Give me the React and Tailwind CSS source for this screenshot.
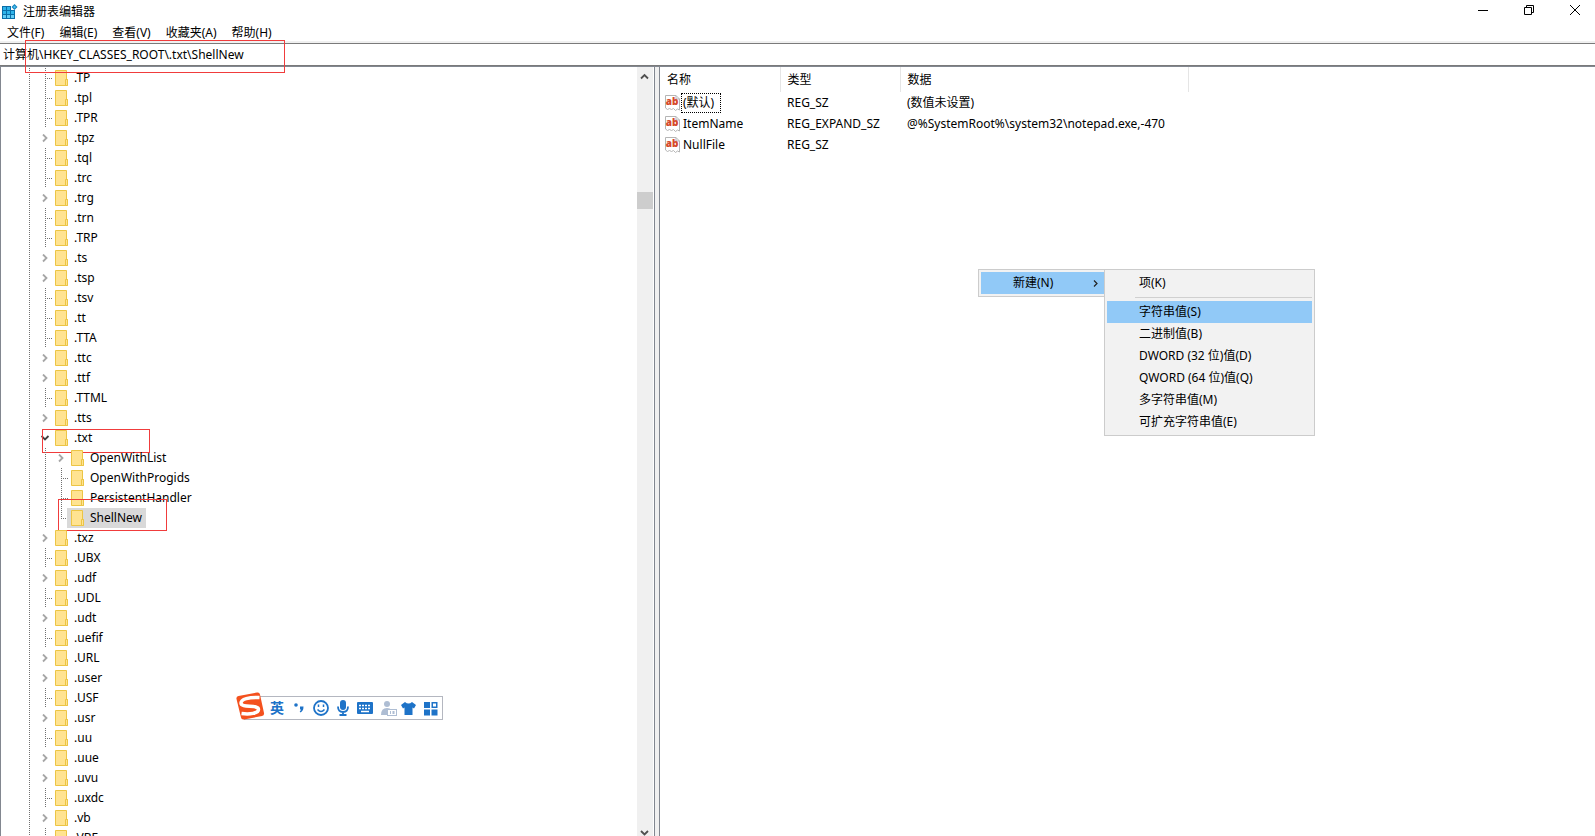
import { useState } from 'react';
import clsx from 'clsx';

const MENUS = ['文件(F)', '编辑(E)', '查看(V)', '收藏夹(A)', '帮助(H)'];

const TREE = [
  { name: '.TP' },
  { name: '.tpl' },
  { name: '.TPR' },
  { name: '.tpz', expandable: true },
  { name: '.tql' },
  { name: '.trc' },
  { name: '.trg', expandable: true },
  { name: '.trn' },
  { name: '.TRP' },
  { name: '.ts', expandable: true },
  { name: '.tsp', expandable: true },
  { name: '.tsv' },
  { name: '.tt' },
  { name: '.TTA' },
  { name: '.ttc', expandable: true },
  { name: '.ttf', expandable: true },
  { name: '.TTML' },
  { name: '.tts', expandable: true },
  { name: '.txt', expandable: true, open: true, marked: true },
  { name: 'OpenWithList', child: true, expandable: true },
  { name: 'OpenWithProgids', child: true },
  { name: 'PersistentHandler', child: true },
  { name: 'ShellNew', child: true, last: true, marked: true },
  { name: '.txz', expandable: true },
  { name: '.UBX' },
  { name: '.udf', expandable: true },
  { name: '.UDL' },
  { name: '.udt', expandable: true },
  { name: '.uefif' },
  { name: '.URL', expandable: true },
  { name: '.user', expandable: true },
  { name: '.USF' },
  { name: '.usr', expandable: true },
  { name: '.uu' },
  { name: '.uue', expandable: true },
  { name: '.uvu', expandable: true },
  { name: '.uxdc' },
  { name: '.vb', expandable: true },
  { name: '.VBE' },
];

const VALUES = [
  { name: '(默认)', type: 'REG_SZ', data: '(数值未设置)', focused: true },
  { name: 'ItemName', type: 'REG_EXPAND_SZ', data: '@%SystemRoot%\\system32\\notepad.exe,-470' },
  { name: 'NullFile', type: 'REG_SZ', data: '' },
];

const NEW_ITEMS = [
  '字符串值(S)',
  '二进制值(B)',
  'DWORD (32 位)值(D)',
  'QWORD (64 位)值(Q)',
  '多字符串值(M)',
  '可扩充字符串值(E)',
];

function RegeditIcon() {
  return (
    <svg className="h-4 w-4" viewBox="0 0 16 16" aria-hidden="true">
      <path d="M0 2h9v4h4v9H0z" fill="#0a6ea8" />
      <path d="M1 3h3v3H1zM5 3h3v3H5zM1 7h3v3H1zM5 7h3v3H5zM9 7h3v3H9z" fill="#2fb4ea" />
      <path d="M1 11h3v3H1zM5 11h3v3H5zM9 11h3v3H9z" fill="#63cdf5" />
      <path d="M12.500 0 15.500 3l-3 3-3-3z" fill="#1583bf" />
      <path d="M12.500 1.500 14 3l-1.500 1.500L11 3z" fill="#49c0f0" />
    </svg>
  );
}

function FolderIcon() {
  return (
    <svg className="h-4 w-[13px] shrink-0" viewBox="0 0 13 16" aria-hidden="true">
      <path d="M.5.5h11v9h1v6H.5z" fill="#ffe391" stroke="#ecc545" />
      <path d="M10.500 9.500h2v6h-2z" fill="#ffe391" stroke="#ecc545" />
    </svg>
  );
}

function StringIcon() {
  return (
    <svg className="h-4 w-4 shrink-0" viewBox="0 0 16 16" aria-hidden="true">
      <path d="M.5.500h10.500l3.500 3.500v11l-2-1-2 1.500-2-2-2 1-2-1-2 1L.5 13z" fill="#fff" stroke="#b5b5b5" />
      <path d="M11 .5V4h3.500" fill="none" stroke="#b5b5b5" />
      <text x="7" y="10" textAnchor="middle" fontSize="10" fontWeight="900" fontFamily="Noto Sans, sans-serif" fill="#d6492a">ab</text>
    </svg>
  );
}

function Chevron({ open }) {
  return open ? (
    <svg className="h-[9px] w-[9px]" viewBox="0 0 9 9" aria-hidden="true">
      <path d="M.5 2 4 5.500 7.500 2" fill="none" stroke="#404040" strokeWidth="1.800" />
    </svg>
  ) : (
    <svg className="h-[9px] w-[9px]" viewBox="0 0 9 9" aria-hidden="true">
      <path d="M2 .5 5.500 4 2 7.500" fill="none" stroke="#a6a6a6" strokeWidth="1.800" />
    </svg>
  );
}

// One 16px column of the tree's dotted guides
function Guide({ kind, open }) {
  return (
    <span className="flex h-5 w-4 shrink-0 items-center justify-center">
      {kind === 'toggle' ? (
        <Chevron open={open} />
      ) : (
        <svg className="h-5 w-4" viewBox="0 0 16 20" fill="none" stroke="#707070" strokeDasharray="1 1" aria-hidden="true">
          <path d={kind === 'corner' ? 'M8.500 0v11' : 'M8.500 0v20'} />
          {(kind === 'tee' || kind === 'corner') && <path d="M10 10.500h5" />}
        </svg>
      )}
    </span>
  );
}

function TreeRow({ node, selected, onSelect }) {
  let kind = 'tee';
  if (node.expandable) kind = 'toggle';
  else if (node.last) kind = 'corner';
  return (
    <li className="relative flex h-5 pl-5">
      <Guide kind="line" />
      {node.child && <Guide kind="line" />}
      <Guide kind={kind} open={node.open} />
      <button
        type="button"
        onClick={onSelect}
        className={clsx('-ml-[2px] flex h-5 items-center gap-[6px] pr-1 pl-1 whitespace-pre', selected && 'bg-[#d9d9d9]')}
      >
        <FolderIcon />
        <span>{node.name}</span>
      </button>
      {node.marked && (
        <span
          className={clsx(
            'pointer-events-none absolute border border-[#f03c3c]',
            node.child ? '-top-[9px] left-[57px] h-8 w-[109px]' : 'top-[1px] left-[41px] h-6 w-[108px]'
          )}
        />
      )}
    </li>
  );
}

function TreePane() {
  const [selected, setSelected] = useState('ShellNew');
  return (
    <div className="flex w-[655px] shrink-0 overflow-hidden border-x border-[#828790] pr-px">
      <ul className="min-w-0 grow pt-px">
        {TREE.map((node) => (
          <TreeRow
            key={node.name}
            node={node}
            selected={selected === node.name}
            onSelect={() => setSelected(node.name)}
          />
        ))}
      </ul>
      <div className="flex w-4 shrink-0 flex-col items-center bg-[#f0f0f0]">
        <svg className="mt-[5px] mr-px h-[9px] w-[9px] shrink-0" viewBox="0 0 9 9" aria-hidden="true">
          <path d="M1 6.500 4.500 3 8 6.500" fill="none" stroke="#505050" strokeWidth="1.800" />
        </svg>
        <div className="mt-[111px] h-[17px] w-full shrink-0 bg-[#cdcdcd]" />
        <div className="grow" />
        <svg className="mr-px h-2 w-[9px] shrink-0" viewBox="0 0 9 8" aria-hidden="true">
          <path d="M1 3 4.500 6.500 8 3" fill="none" stroke="#505050" strokeWidth="1.800" />
        </svg>
      </div>
    </div>
  );
}

function ValuePane() {
  return (
    <div className="min-w-0 grow overflow-hidden border-l border-[#828790]">
      <table className="w-[528px] table-fixed border-collapse text-left">
        <colgroup>
          <col className="w-[120px]" />
          <col className="w-[120px]" />
          <col className="w-[288px]" />
        </colgroup>
        <thead>
          <tr className="h-[25px]">
            {['名称', '类型', '数据'].map((h) => (
              <th key={h} className="border-r border-[#e5e5e5] px-[7px] font-normal">{h}</th>
            ))}
          </tr>
        </thead>
        <tbody>
          {VALUES.map((v) => (
            <tr key={v.name} className="h-[21px]">
              <td className="pl-[5px]">
                <span className="flex items-center">
                  <StringIcon />
                  <span className={clsx('border border-dotted px-px', v.focused ? 'border-black pr-[6px]' : 'border-transparent')}>
                    {v.name}
                  </span>
                </span>
              </td>
              <td className="px-[7px]">{v.type}</td>
              <td className="px-[7px]">{v.data}</td>
            </tr>
          ))}
        </tbody>
      </table>
    </div>
  );
}

function ContextMenu() {
  return (
    <div className="absolute top-[269px] left-[978px] flex items-start">
      <div className="w-[126px] border border-r-0 border-[#ccc] bg-[#f2f2f2] p-[2px] pr-0">
        <button type="button" className="flex h-[22px] w-full items-center justify-between bg-[#91c9f7] pr-1 pl-8">
          <span>新建(N)</span>
          <svg className="h-[9px] w-[9px]" viewBox="0 0 9 9" aria-hidden="true">
            <path d="M3 1.500 6 4.500 3 7.500" fill="none" stroke="#222" strokeWidth="1.200" />
          </svg>
        </button>
      </div>
      <div className="w-[211px] border border-[#ccc] bg-[#f2f2f2] p-[2px]">
        <button type="button" className="flex h-[22px] w-full items-center pl-8">项(K)</button>
        <hr className="my-[3px] ml-7 border-[#d0d0d0]" />
        {NEW_ITEMS.map((item, i) => (
          <button
            key={item}
            type="button"
            className={clsx('flex h-[22px] w-full items-center pl-8 whitespace-pre', i === 0 && 'bg-[#91c9f7]')}
          >
            {item}
          </button>
        ))}
      </div>
    </div>
  );
}

function ImeBar() {
  return (
    <div className="absolute top-[696px] left-[244px] flex h-6 w-[199px] items-center border border-[#b4b7c0] bg-white pl-[25px] text-[#1e73c8]">
      <svg className="absolute -top-[5px] -left-[10px] h-7 w-[30px]" viewBox="0 0 30 28" aria-hidden="true">
        <path d="M3.500 4 22 .5q2.500-.5 3 2L29 21q.5 2.500-2 3L9 27.500q-2.500.5-3-2L1.500 7q-.5-2.500 2-3z" fill="#f4511e" />
        <path d="M24.500 5.500C14 5 6 7 6 11c0 5.500 17.500 1 17.500 6.500 0 4-9 5-17 4" fill="none" stroke="#fff" strokeWidth="3.500" />
      </svg>
      <span className="w-[22px] text-[14px] leading-5 font-bold">英</span>
      <svg className="h-5 w-[150px]" viewBox="0 0 150 20" fill="none" aria-hidden="true">
        <g fill="currentColor">
          <circle cx="4" cy="7" r="1.800" />
          <path d="M8 8.500h3.500q0 4.500-3 6l-.8-1q1.200-.8 1.300-2H8z" />
        </g>
        <g transform="translate(2 0)">
          <circle cx="27" cy="10" r="7" stroke="currentColor" strokeWidth="1.800" />
          <path d="M24.500 6.500v2.500M29.500 6.500v2.500M23.500 11.500q3.500 4 7 0" stroke="currentColor" strokeWidth="1.500" />
          <rect x="46" y="2" width="6" height="10" rx="3" fill="currentColor" />
          <path d="M44 8.500q0 5.500 5 5.500t5-5.500M49 14v3M45.500 17h7" stroke="currentColor" strokeWidth="1.800" />
          <rect x="63" y="4" width="16" height="12" rx="1" fill="currentColor" />
          <path d="M65 7.500h12M65 10.500h12" stroke="#fff" strokeWidth="1.500" strokeDasharray="2 1" />
          <path d="M67 13.500h8" stroke="#fff" strokeWidth="1.500" />
          <g fill="#aebdd3">
            <circle cx="93" cy="6" r="3" />
            <path d="M87 17q0-7 6-7 3 0 4.500 2v5z" />
            <rect x="93.500" y="11.500" width="9" height="6" fill="#fff" stroke="#aebdd3" />
            <path d="M96 13h1v3h-1zM98.500 13h2v3h-2z" />
          </g>
          <path d="m111 4-4 3 2 3.500 1.500-1V17h8V9.500l1.500 1 2-3.500-4-3q-3.500 3-7 0z" fill="currentColor" />
          <path d="M130 4h6v6h-6zM130 11.500h6v6h-6zM137.500 11.500h6v6h-6z" fill="currentColor" />
          <rect x="138.250" y="4.750" width="4.500" height="4.500" stroke="currentColor" strokeWidth="1.500" />
        </g>
      </svg>
    </div>
  );
}

function App() {
  const [path, setPath] = useState('计算机\\HKEY_CLASSES_ROOT\\.txt\\ShellNew');
  return (
    <div className="relative flex h-screen flex-col overflow-hidden bg-white font-['Noto_Sans','Noto_Sans_CJK_SC',sans-serif] text-[12px] leading-[18px] text-black">
      <header className="flex h-6 shrink-0 items-center pl-[2px]">
        <RegeditIcon />
        <h1 className="grow pl-[5px]">注册表编辑器</h1>
        <div className="flex h-5 items-center gap-[6px] self-start">
          <button type="button" aria-label="最小化" className="flex w-10 justify-center">
            <svg className="h-[10px] w-[10px]" viewBox="0 0 10 10"><path d="M0 5.500h10" stroke="#000" /></svg>
          </button>
          <button type="button" aria-label="还原" className="flex w-10 justify-center">
            <svg className="h-[10px] w-[10px]" viewBox="0 0 10 10" fill="none" stroke="#000"><path d="M.5 2.500h7v7h-7zM2.500 2.500v-2h7v7h-2" /></svg>
          </button>
          <button type="button" aria-label="关闭" className="flex w-10 justify-center">
            <svg className="h-[10px] w-[10px]" viewBox="0 0 10 10" stroke="#000"><path d="m0 0 10 10M10 0 0 10" /></svg>
          </button>
        </div>
      </header>
      <nav className="flex h-[17px] shrink-0 items-start gap-[15px] pl-[7px]">
        {MENUS.map((m) => (
          <button key={m} type="button">{m}</button>
        ))}
      </nav>
      <div className="relative h-[25px] shrink-0 border-t-2 border-[#f0f0f0]">
        <input
          aria-label="地址"
          value={path}
          onChange={(e) => setPath(e.target.value)}
          className="block h-[23px] w-full border-y border-[#7a7a7a] pb-[2px] pl-[3px] outline-none"
        />
        <span className="pointer-events-none absolute -top-[3px] left-[25px] z-10 h-[33px] w-[260px] border border-[#f03c3c]" />
      </div>
      <main className="flex min-h-0 grow gap-1 border-t border-[#828790] bg-[#f0f0f0] [&>div]:bg-white">
        <TreePane />
        <ValuePane />
      </main>
      <ContextMenu />
      <ImeBar />
    </div>
  );
}

export default App;
